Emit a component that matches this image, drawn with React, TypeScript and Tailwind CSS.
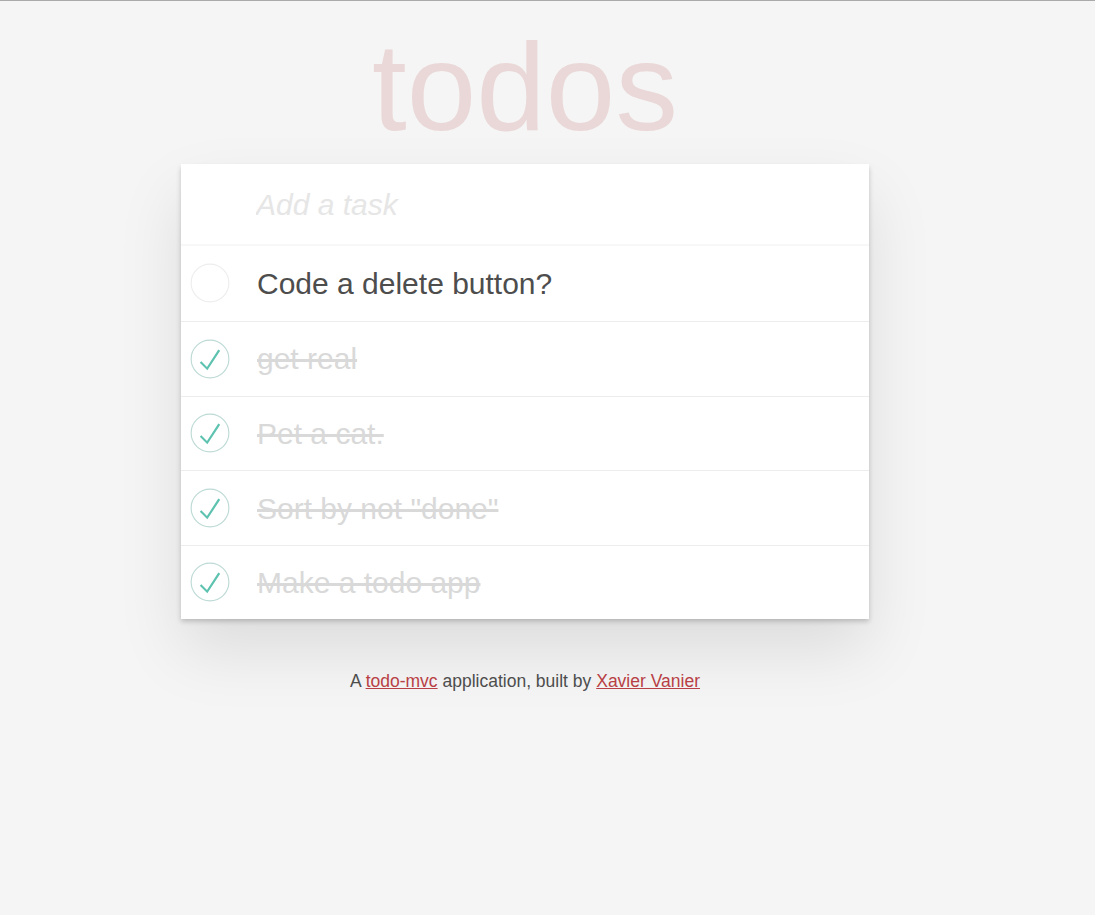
import React from 'react';

type Todo = { title: string; done: boolean };

const todos: Todo[] = [
  { title: 'Code a delete button?', done: false },
  { title: 'get real', done: true },
  { title: 'Pet a cat.', done: true },
  { title: 'Sort by not "done"', done: true },
  { title: 'Make a todo app', done: true },
];

function Toggle({ done }: { done: boolean }) {
  return (
    <svg width="40" height="40" viewBox="-3 -3 106 106" className="shrink-0">
      <circle cx="50" cy="50" r="50" fill="none" stroke={done ? '#bddad5' : '#ededed'} strokeWidth="3" />
      {done && <path fill="#5dc2af" d="M72 25L42 71 27 56l-4 4 20 20 34-52z" />}
    </svg>
  );
}

export default function App() {
  return (
    <div
      className="min-h-[915px] bg-[#f5f5f5] border-t border-[#aaaaaa] text-[#4d4d4d]"
      style={{ fontFamily: '"Helvetica Neue", Helvetica, "Liberation Sans", Arial, sans-serif' }}
    >
      <div className="w-[688px] ml-[181px]">
        <h1 className="pt-[23px] mb-[15px] text-center text-[125px] leading-[125px] font-normal text-[rgba(175,47,47,0.15)]">
          todos
        </h1>

        <section className="bg-white shadow-[0_2.5px_5px_0_rgba(0,0,0,0.2),0_31px_62px_0_rgba(0,0,0,0.1)]">
          <header className="h-[82px] flex items-center pl-[75px] pr-5 shadow-[inset_0_-2px_1px_rgba(0,0,0,0.03)]">
            <input
              className="w-full bg-transparent outline-none text-[30px] leading-[42px] italic placeholder:text-[#e6e6e6] placeholder:font-light"
              placeholder="Add a task"
            />
          </header>

          <ul>
            {todos.map((todo) => (
              <li
                key={todo.title}
                className="h-[74.75px] last:h-[73.75px] flex items-center border-t border-[#ededed] first:border-t-0 pl-[9px]"
              >
                <Toggle done={todo.done} />
                <span
                  className={
                    'ml-[27px] pt-[1px] text-[30px] leading-[36px] ' +
                    (todo.done ? 'text-[#d9d9d9] line-through' : 'text-[#4d4d4d]')
                  }
                >
                  {todo.title}
                </span>
              </li>
            ))}
          </ul>
        </section>

        <p className="mt-[50px] text-center text-[17.5px] leading-[24.5px] text-[#4d4d4d]">
          A{' '}
          <a href="#" className="text-[#b83f45] underline">
            todo-mvc
          </a>{' '}
          application, built by{' '}
          <a href="#" className="text-[#b83f45] underline">
            Xavier Vanier
          </a>
        </p>
      </div>
    </div>
  );
}
